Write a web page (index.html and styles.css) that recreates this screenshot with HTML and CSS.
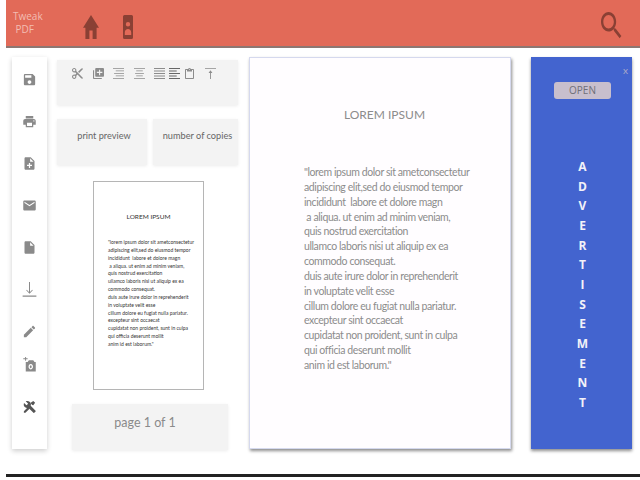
FILE: index.html
```html
<!DOCTYPE html>
<html lang="en">
<head>
    <meta charset="UTF-8">
    <title>Tweak PDF</title>
    <link rel="stylesheet" href="styles.css">
</head>
<body>
    <header class="topbar">
        <div class="brand">Tweak<br>&nbsp;PDF</div>
        <svg class="home-icon" viewBox="2 3 20 17" preserveAspectRatio="none"><path d="M10 20v-6h4v6h5v-8h3L12 3 2 12h3v8z"/></svg>
        <svg class="portrait-icon" viewBox="0 0 10 24"><path fill-rule="evenodd" d="M1.500 0h7A1.500 1.500 0 0 1 10 1.500v21A1.500 1.500 0 0 1 8.500 24h-7A1.500 1.500 0 0 1 0 22.500v-21A1.500 1.500 0 0 1 1.500 0zM5 7a2.200 2.200 0 1 0 0 4.400A2.200 2.200 0 0 0 5 7zM5 14c-1.800 0-3.200 1.400-3.200 3.400V20h6.400v-2.600C8.200 15.400 6.800 14 5 14z"/></svg>
        <svg class="search-icon" viewBox="3 3 18 18" preserveAspectRatio="none"><path d="M15.500 14h-.79l-.28-.27C15.410 12.590 16 11.110 16 9.500 16 5.910 13.090 3 9.500 3S3 5.910 3 9.500 5.910 16 9.500 16c1.610 0 3.090-.59 4.230-1.570l.27.28v.79l5 4.990L20.490 19l-4.990-5zm-6 0C7.010 14 5 11.990 5 9.500S7.010 5 9.500 5 14 7.010 14 9.500 11.990 14 9.500 14z"/></svg>
    </header>

    <main class="content">
        <nav class="sidebar">
            <svg viewBox="0 0 24 24"><path d="M17 3H5c-1.110 0-2 .9-2 2v14c0 1.100.89 2 2 2h14c1.100 0 2-.9 2-2V7l-4-4zm-5 16c-1.660 0-3-1.340-3-3s1.340-3 3-3 3 1.340 3 3-1.340 3-3 3zm3-10H5V5h10v4z"/></svg>
            <svg viewBox="0 0 24 24"><path d="M19 8H5c-1.660 0-3 1.340-3 3v6h4v4h12v-4h4v-6c0-1.660-1.340-3-3-3zm-3 11H8v-5h8v5zm3-7c-.55 0-1-.45-1-1s.45-1 1-1 1 .45 1 1-.45 1-1 1zm-1-9H6v4h12V3z"/></svg>
            <svg viewBox="0 0 24 24"><path d="M14 2H6c-1.100 0-1.990.9-1.990 2L4 20c0 1.100.89 2 1.990 2H18c1.100 0 2-.9 2-2V8l-6-6zm2 14h-3v3h-2v-3H8v-2h3v-3h2v3h3v2zm-3-7V3.500L18.500 9H13z"/></svg>
            <svg viewBox="0 0 24 24"><path d="M20 4H4c-1.100 0-2 .9-2 2v12c0 1.100.9 2 2 2h16c1.100 0 2-.9 2-2V6c0-1.100-.9-2-2-2zm0 4l-8 5-8-5V6l8 5 8-5v2z"/></svg>
            <svg viewBox="0 0 24 24"><path d="M6 2c-1.100 0-1.990.9-1.990 2L4 20c0 1.100.89 2 1.990 2H18c1.100 0 2-.9 2-2V8l-6-6H6zm7 7V3.500L18.500 9H13z"/></svg>
            <svg viewBox="0 0 24 24"><path d="M11.200 0h1.600v16l3.600-3.600.9.900-5.300 5.300-5.300-5.300.9-.9 3.600 3.600zM1 21.500h22V23.500H1z"/></svg>
            <svg viewBox="0 0 24 24"><path d="M3 17.250V21h3.750L17.810 9.940l-3.750-3.750L3 17.250zM20.710 7.040c.39-.39.39-1.020 0-1.410l-2.340-2.340c-.39-.39-1.020-.39-1.410 0l-1.830 1.830 3.750 3.750 1.830-1.830z"/></svg>
            <svg class="side-camera" viewBox="0 0 24 24"><path fill-rule="evenodd" d="M2 2h3V0h1.500v2H9v1.500H6.500V6H5V3.500H2zM6 8h3l2-3h7l2 3h2v15H6zM14 11a3.500 4.500 0 1 0 .01 0zM14 13a1.500 2.500 0 1 1-.01 0z"/></svg>
            <svg class="side-tools" viewBox="0 0 24 24"><path d="M21.700 18.600l-7.800-7.800c.8-2 .4-4.300-1.300-6C10.800 3 8.100 2.700 6 3.700l3.800 3.800-2.600 2.600L3.300 6.300C2.300 8.400 2.700 11.100 4.500 12.900c1.700 1.700 4 2.100 6 1.300l7.800 7.800c.4.400.9.400 1.300 0l2.100-2.100c.4-.4.4-.9 0-1.300z"/><path d="M3 19.500l7-7 2.500 2.500-7 7H3zM14 6l4-3 3 3-3 4-1.500-.5-2-2z"/></svg>
        </nav>

        <section class="tools">
            <div class="toolbar panel">
                <svg viewBox="2 2 20 20"><path d="M9.640 7.640c.23-.5.36-1.050.36-1.640 0-2.210-1.790-4-4-4S2 3.790 2 6s1.790 4 4 4c.59 0 1.140-.13 1.640-.36L10 12l-2.360 2.360C7.140 14.130 6.590 14 6 14c-2.210 0-4 1.790-4 4s1.790 4 4 4 4-1.790 4-4c0-.59-.13-1.140-.36-1.640L12 14l7 7h3v-1L9.640 7.640zM6 8c-1.100 0-2-.89-2-2s.9-2 2-2 2 .89 2 2-.9 2-2 2zm0 12c-1.100 0-2-.89-2-2s.9-2 2-2 2 .89 2 2-.9 2-2 2zm13-17l-6 6 2 2 7-7V3z"/></svg>
                <svg viewBox="2 2 20 20"><path d="M4 6H2v14c0 1.100.9 2 2 2h14v-2H4V6zm16-4H8c-1.100 0-2 .9-2 2v12c0 1.100.9 2 2 2h12c1.100 0 2-.9 2-2V4c0-1.100-.9-2-2-2zm-1 9h-4v4h-2v-4H9V9h4V5h2v4h4v2z"/></svg>
                <svg viewBox="0 0 20 20"><path d="M0 0h20v1.500H0zM5 4.500h15V6H5zM2 9h18v1.500H2zM5 13.500h15V15H5zM0 18h20v1.500H0z"/></svg>
                <svg viewBox="0 0 20 20"><path d="M0 0h20v1.500H0zM4 4.500h12V6H4zM2 9h16v1.500H2zM4 13.500h12V15H4zM0 18h20v1.500H0z"/></svg>
                <div class="tool-group">
                    <svg viewBox="0 0 20 20"><path d="M0 0h20v2H0zM0 4.500h20v2H0zM0 9h20v2H0zM0 13.500h20v2H0zM0 18h20v2H0z"/></svg>
                    <svg class="tool-dark" viewBox="0 0 20 20"><path d="M0 0h20v2H0zM0 4.500h14v2H0zM0 9h20v2H0zM0 13.500h14v2H0zM0 18h20v2H0z"/></svg>
                    <svg viewBox="3 0 18 22"><path d="M19 2h-4.180C14.400.84 13.300 0 12 0c-1.300 0-2.400.84-2.820 2H5c-1.100 0-2 .9-2 2v16c0 1.100.9 2 2 2h14c1.100 0 2-.9 2-2V4c0-1.100-.9-2-2-2zm-7 0c.55 0 1 .45 1 1s-.45 1-1 1-1-.45-1-1 .45-1 1-1zm7 18H5V4h2v3h10V4h2v16z"/></svg>
                </div>
                <svg viewBox="0 0 20 20"><path d="M0 0h20v1.500H0zM9.200 5h1.600v15H9.200zM10 4l3.500 5h-7z"/></svg>
            </div>

            <div class="option-row">
                <div class="option panel option-preview">print preview</div>
                <div class="option panel option-copies">number of copies</div>
            </div>

            <div class="thumb">
                <h3 class="thumb-title">LOREM IPSUM</h3>
                <p class="thumb-text">"lorem ipsum dolor sit ametconsectetur<br>adipiscing elit,sed do eiusmod tempor<br>incididunt&nbsp; labore et dolore magn<br>&nbsp;a aliqua. ut enim ad minim veniam,<br>quis nostrud exercitation<br>ullamco laboris nisi ut aliquip ex ea<br>commodo consequat.<br>duis aute irure dolor in reprehenderit<br>in voluptate velit esse<br>cillum dolore eu fugiat nulla pariatur.<br>excepteur sint occaecat<br>cupidatat non proident, sunt in culpa<br>qui officia deserunt mollit<br>anim id est laborum."</p>
            </div>
            <div class="page-count panel">page 1 of 1</div>
        </section>

        <article class="document">
            <h2 class="doc-title">LOREM IPSUM</h2>
            <p class="doc-text">"lorem ipsum dolor sit ametconsectetur<br>adipiscing elit,sed do eiusmod tempor<br>incididunt&nbsp; labore et dolore magn<br>&nbsp;a aliqua. ut enim ad minim veniam,<br>quis nostrud exercitation<br>ullamco laboris nisi ut aliquip ex ea<br>commodo consequat.<br>duis aute irure dolor in reprehenderit<br>in voluptate velit esse<br>cillum dolore eu fugiat nulla pariatur.<br>excepteur sint occaecat<br>cupidatat non proident, sunt in culpa<br>qui officia deserunt mollit<br>anim id est laborum."</p>
        </article>

        <aside class="ad">
            <div class="ad-close">x</div>
            <div class="ad-open">OPEN</div>
            <div class="ad-word">
                <span>A</span><span>D</span><span>V</span><span>E</span><span>R</span><span>T</span><span>I</span><span>S</span><span>E</span><span>M</span><span>E</span><span>N</span><span>T</span>
            </div>
        </aside>
    </main>

    <footer class="bottom-rule"></footer>
</body>
</html>
```

FILE: styles.css
```css
/* Page */
body {
    margin: 0;
    height: 480px;
    overflow: hidden;
    background-color: #fff;
    font-family: Lato, sans-serif;
    color: #777;
}

/* Top bar */
.topbar {
    display: flex;
    align-items: flex-start;
    height: 46px;
    margin-left: 6px;
    background-color: #e26a58;
    border-bottom: 2px solid #8d7772;
    fill: #8a4034;
}

.brand {
    width: 70px;
    padding: 10px 0 0 7px;
    font-family: "Open Sans", sans-serif;
    font-size: 10px;
    line-height: 12.5px;
    color: #f3bdb2;
}

.home-icon {
    width: 16px;
    height: 24px;
    margin-top: 15px;
}

.portrait-icon {
    width: 10px;
    height: 24px;
    margin: 15px 0 0 24px;
}

.search-icon {
    width: 21px;
    height: 27px;
    margin: 12px 0 0 468px;
}

/* Main area */
.content {
    display: flex;
    align-items: flex-start;
    padding: 9px 0 0 12px;
}

.sidebar {
    display: flex;
    flex-direction: column;
    align-items: center;
    gap: 27px;
    box-sizing: border-box;
    width: 35px;
    height: 392px;
    padding-top: 15px;
    background-color: #fff;
    box-shadow: 0 2px 5px rgba(0, 0, 0, 0.2);
    fill: #8a8a8a;
}

.sidebar svg {
    width: 15px;
    height: 15px;
}

.sidebar .side-camera {
    margin-top: -9px;
}

.sidebar .side-tools {
    fill: #555;
}

.tools {
    width: 181px;
    margin: 3px 0 0 10px;
}

.panel {
    background-color: #f3f3f3;
    box-shadow: 0 1px 3px rgba(0, 0, 0, 0.08);
}

.toolbar {
    display: flex;
    align-items: flex-start;
    gap: 9.5px;
    box-sizing: border-box;
    height: 45px;
    padding: 8px 0 0 15px;
    fill: #8c8c8c;
}

.toolbar svg {
    width: 11px;
    height: 11px;
}

.tool-group {
    display: flex;
    gap: 4px;
}

.toolbar .tool-dark {
    fill: #666;
}

.option-row {
    display: flex;
    gap: 6px;
    margin-top: 14px;
}

.option {
    box-sizing: border-box;
    height: 46px;
    padding: 9px 0 0 4px;
    text-align: center;
    font-size: 9.2px;
    line-height: 16px;
    color: #666;
}

.option-preview {
    width: 90px;
}

.option-copies {
    width: 85px;
}

/* Small page preview */
.thumb {
    box-sizing: border-box;
    width: 111px;
    height: 209px;
    margin: 16px 0 0 36px;
    padding-top: 29px;
    border: 1px solid #b5b5b5;
    color: #333;
}

.thumb-title {
    margin: 0;
    text-align: center;
    font-size: 6.5px;
    font-weight: normal;
    line-height: 12px;
}

.thumb-text {
    margin: 16px 0 0 14px;
    font-size: 5px;
    line-height: 7.85px;
    white-space: nowrap;
}

.page-count {
    box-sizing: border-box;
    width: 156px;
    height: 46px;
    margin: 14px 0 0 15px;
    padding-right: 10px;
    text-align: center;
    font-size: 12.5px;
    line-height: 38px;
    color: #8a8a8a;
}

/* Big page */
.document {
    box-sizing: border-box;
    width: 262px;
    height: 392px;
    margin-left: 11px;
    padding-top: 48px;
    background-color: #fffdff;
    border: 1px solid #d5d9ee;
    box-shadow: 1px 2px 3px rgba(0, 0, 0, 0.45);
    color: #8c8c8c;
}

.doc-title {
    margin: 0;
    padding-left: 9px;
    text-align: center;
    font-size: 12px;
    font-weight: normal;
    line-height: 18px;
}

.doc-text {
    margin: 41px 0 0 54px;
    font-size: 10.5px;
    letter-spacing: -0.4px;
    line-height: 14.85px;
    white-space: nowrap;
}

/* Advert */
.ad {
    position: relative;
    box-sizing: border-box;
    width: 101px;
    height: 392px;
    margin-left: 20px;
    padding-top: 25px;
    background-color: #4364cf;
    box-shadow: 0 2px 3px rgba(0, 0, 0, 0.45);
}

.ad-close {
    position: absolute;
    top: 7px;
    right: 4px;
    font-size: 10px;
    line-height: 12px;
    color: #a9a9c9;
}

.ad-open {
    width: 57px;
    height: 17px;
    margin-left: 23px;
    background-color: #c8bfcd;
    border-radius: 3px;
    text-align: center;
    font-family: "Open Sans", sans-serif;
    font-size: 10px;
    line-height: 17px;
    color: #6f6f78;
}

.ad-word {
    display: flex;
    flex-direction: column;
    align-items: center;
    margin: 58px 0 0 2px;
    font-family: "Open Sans", sans-serif;
    font-size: 12px;
    font-weight: bold;
    line-height: 19.67px;
    color: #f2f2f8;
}

/* Bottom rule */
.bottom-rule {
    height: 3px;
    margin: 24px 0 0 6px;
    background-color: #222;
}
```
